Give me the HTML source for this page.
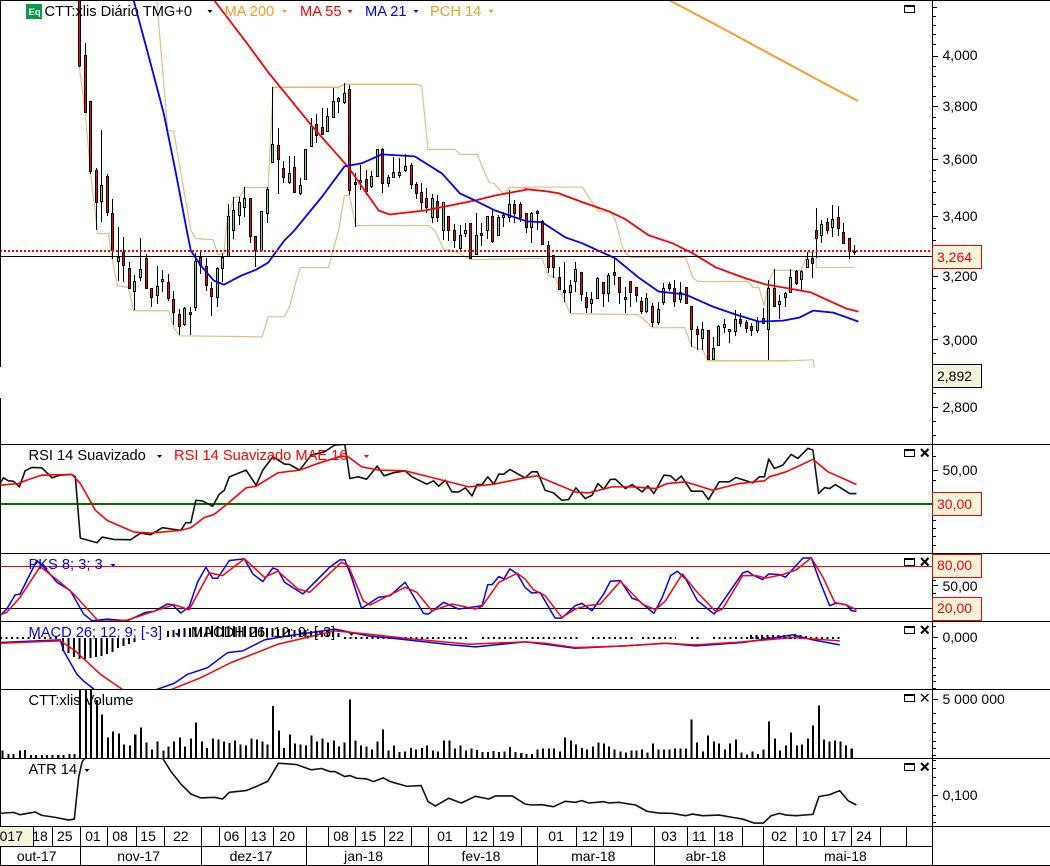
<!DOCTYPE html>
<html><head><meta charset="utf-8"><title>CTT:xlis</title>
<style>
html,body{margin:0;padding:0;background:#fff}
svg{display:block;font-family:"Liberation Sans",Arial,sans-serif;font-size:14px}
.l{fill:none;stroke-linejoin:round}
.l *{vector-effect:non-scaling-stroke}
.t{font-size:14.67px}
</style></head><body>
<svg width="1050" height="866" viewBox="0 0 1050 866" xmlns="http://www.w3.org/2000/svg">
<defs>
<clipPath id="c0"><rect x="0" y="0" width="932" height="444"/></clipPath>
<clipPath id="c1"><rect x="0" y="445" width="932" height="108"/></clipPath>
<clipPath id="c2"><rect x="0" y="554" width="932" height="67"/></clipPath>
<clipPath id="c3"><rect x="0" y="622" width="932" height="67"/></clipPath>
<clipPath id="c4"><rect x="0" y="690" width="932" height="68"/></clipPath>
<clipPath id="c5"><rect x="0" y="759" width="932" height="67"/></clipPath>
</defs>
<rect width="1050" height="866" fill="#fff"/>

<!-- main pane -->
<g clip-path="url(#c0)">
<g class="l" stroke="#dcc088" stroke-width="1.2">
<g transform="matrix(1.00435 0 0 1.0025 0 0)">
<polyline points="156,0 167,130 173,131 190,230 195,238 212,239 217,254 223,253 225,230 227,217 233,197 239,196 244,187 267,187 272,87 337,87 343,84 415,84 420,86 426,149 453,149 458,154 475,154 487,182 492,183 502,194 507,187 525,187"/>
<polyline points="79,67 85,113 90,172 97,230 97,233 108,233 110,250 117,285 128,287 133,310 168,310 173,327 179,335 261,336 267,316 283,316 288,307 295,280 299,267 327,267 337,230 343,195 348,195 354,225 427,225 433,230 442,249 448,249 458,253 469,259 525,258"/>
</g>
<g transform="matrix(1.00435 0 0 1.00435 -2.28 -.74)">
<polyline points="525,187 582,187 598,211 610,211 615,220 623,250 630,257 685,257 692,277 697,281 747,281 752,287 758,287 763,305 768,280 773,270 800,270 807,252 815,252 815,267 853,267"/>
<polyline points="525,258 542,258 548,275 555,277 570,313 638,314 652,327 684,327 691,346 702,349 707,360 788,360 812,359 813,367"/>
</g>
</g>
<g class="l" stroke="#d8a520" stroke-width="1" opacity=".65">
<polyline transform="matrix(1.00435 0 0 1.0025 0 0)" points="272,87 337,87 343,84 415,84"/>
<polyline transform="matrix(1.00435 0 0 1.00435 -2.28 -.74)" points="630,257 685,257"/>
<polyline transform="matrix(1.00435 0 0 1.00435 -2.28 -.74)" points="707,360 788,360"/>
</g>
<polyline fill="none" stroke="#ff9a2e" stroke-width="2" points="669,0 720,27 770,54 820,81 858,101"/>

<!-- wicks -->
<g fill="none" stroke="#000" stroke-width="1" shape-rendering="crispEdges">
<path d="M79.5 0V67M85.5 43V112M90.5 101V174M96.5 168V230M101.5 130V222M107.5 174V216M112.5 199V259M118.5 227V281M123.5 237V282M129.5 262V289M134.5 275V310M140.5 238V281M146.5 254V289M151.5 288V307M157.5 266V304M162.5 270V292M168.5 274V301M173.5 291V325M179.5 309V335M184.5 307V326M190.5 307V335M195.5 253V311M200.5 250V274M206.5 258V291M211.5 282V316M217.5 267V307M222.5 253V282M228.5 204V256M233.5 197V239M239.5 197V225M244.5 187V217M250.5 198V243M255.5 236V267M526.5 213V233M531.5 212V243M537.5 210V230M542.5 220V245M548.5 241V273M553.5 255V278M559.5 267V290M564.5 262V302M570.5 280V313M575.5 262V292M581.5 272V301M586.5 292V313M591.5 292V313M597.5 277V298M603.5 282V307M608.5 273V302M614.5 257V285M619.5 277V304M625.5 287V313M630.5 281V307M636.5 287V302M641.5 297V314M646.5 293V313"/>
<path transform="translate(1 0)" d="M260.5 211V250M266.5 187V223M271.5 87V163M277.5 128V194M282.5 161V183M288.5 156V184M293.5 156V193M299.5 178V195M304.5 149V180M310.5 118V147M315.5 114V143M321.5 108V135M326.5 108V131M332.5 88V117M337.5 97V113M343.5 83V104M348.5 85V195M354.5 173V227M359.5 165V190M365.5 170V195M370.5 171V188M376.5 149V177M381.5 148V193M387.5 175V187M392.5 157V178M651.5 303V327M657.5 302V325M662.5 283V305M668.5 282V291M673.5 280V307M679.5 282V303M685.5 287V303M690.5 306V347M696.5 326V350M701.5 322V350M707.5 330V360M712.5 337V360M717.5 325V346M723.5 319V333M728.5 329V343M734.5 310V336M739.5 313V327M745.5 320V333M750.5 323V336M756.5 317V333M762.5 308V324M767.5 280V360M773.5 269V307M778.5 295V319M784.5 292V307M789.5 269V293M795.5 270V285M800.5 270V290M806.5 252V268M811.5 252V278M815.5 208V258M820.5 220V243M826.5 218V234M831.5 205V237M837.5 206V236M842.5 223V244M848.5 238V259M853.5 245V255"/>
<path transform="translate(2 0)" d="M397.5 158V178M403.5 154V172M409.5 163V189M414.5 182V199M419.5 183V210M424.5 188V213M430.5 194V223M435.5 195V222M441.5 202V240M446.5 216V241M452.5 224V248M458.5 225V250M463.5 223V237M468.5 223V259M474.5 213V255M479.5 223V246M485.5 216V239M490.5 210V243M496.5 215V235M501.5 212V227M507.5 190V222M512.5 200V223M518.5 202V222"/>
</g>
<!-- red bodies -->
<g fill="#f00" stroke="#000" stroke-width="1" shape-rendering="crispEdges">
<path d="M78.5 -1h2v67h-2zM84.5 55.5h2v57h-2zM89.5 101.5h2v70h-2zM95.5 170.5h2v32h-2zM106.5 176.5h2v36h-2zM111.5 213.5h2v37h-2zM122.5 252.5h2v13h-2zM128.5 268.5h2v20h-2zM145.5 258.5h2v30h-2zM150.5 288.5h2v9h-2zM167.5 282.5h2v16h-2zM172.5 299.5h2v13h-2zM178.5 314.5h2v12h-2zM189.5 312.5h2v2h-2zM199.5 257.5h2v8h-2zM205.5 266.5h2v19h-2zM210.5 288.5h2v8h-2zM249.5 198.5h2v38h-2zM254.5 236.5h2v14h-2zM525.5 213.5h2v14h-2zM536.5 211.5h2v2h-2zM541.5 221.5h2v23h-2zM547.5 245.5h2v22h-2zM552.5 255.5h2v12h-2zM558.5 277.5h2v12h-2zM563.5 290.5h2v2h-2zM580.5 272.5h2v22h-2zM585.5 297.5h2v10h-2zM602.5 282.5h2v11h-2zM613.5 272.5h2v3h-2zM618.5 277.5h2v15h-2zM629.5 281.5h2v11h-2zM635.5 287.5h2v8h-2zM640.5 301.5h2v10h-2z"/>
<path transform="translate(1 0)" d="M276.5 145.5h2v14h-2zM281.5 168.5h2v9h-2zM292.5 167.5h2v25h-2zM314.5 124.5h2v11h-2zM320.5 127.5h2v7h-2zM347.5 89.5h2v101h-2zM353.5 182.5h2v2h-2zM364.5 179.5h2v12h-2zM380.5 149.5h2v34h-2zM650.5 306.5h2v16h-2zM667.5 284.5h2v4h-2zM672.5 288.5h2v13h-2zM684.5 287.5h2v16h-2zM689.5 306.5h2v23h-2zM695.5 329.5h2v5h-2zM706.5 330.5h2v29h-2zM738.5 319.5h2v4h-2zM744.5 322.5h2v6h-2zM749.5 326.5h2v4h-2zM761.5 318.5h2v5h-2zM772.5 288.5h2v18h-2zM794.5 271.5h2v12h-2zM810.5 258.5h2v5h-2zM814.5 230.5h2v8h-2zM825.5 222.5h2v8h-2zM836.5 217.5h2v11h-2zM841.5 232.5h2v11h-2zM847.5 238.5h2v13h-2z"/>
<path transform="translate(2 0)" d="M408.5 165.5h2v19h-2zM413.5 184.5h2v9h-2zM418.5 192.5h2v10h-2zM423.5 198.5h2v9h-2zM434.5 201.5h2v16h-2zM445.5 216.5h2v14h-2zM451.5 230.5h2v10h-2zM467.5 223.5h2v35h-2zM478.5 233.5h2v2h-2zM489.5 216.5h2v25h-2zM511.5 204.5h2v9h-2zM517.5 204.5h2v13h-2z"/>
</g>
<!-- green bodies -->
<g fill="#7fd07f" stroke="#000" stroke-width="1" shape-rendering="crispEdges">
<path d="M100.5 185.5h2v16h-2zM117.5 257.5h2v4h-2zM133.5 281.5h2v10h-2zM139.5 269.5h2v8h-2zM156.5 286.5h2v9h-2zM161.5 279.5h2v2h-2zM183.5 308.5h2v16h-2zM194.5 261.5h2v46h-2zM216.5 268.5h2v29h-2zM221.5 257.5h2v11h-2zM227.5 216.5h2v40h-2zM232.5 210.5h2v20h-2zM238.5 202.5h2v13h-2zM243.5 198.5h2v9h-2zM530.5 213.5h2v14h-2zM569.5 285.5h2v7h-2zM574.5 269.5h2v12h-2zM590.5 299.5h2v4h-2zM596.5 278.5h2v20h-2zM607.5 275.5h2v18h-2zM624.5 297.5h2v2h-2zM645.5 298.5h2v13h-2z"/>
<path transform="translate(1 0)" d="M259.5 211.5h2v39h-2zM265.5 189.5h2v24h-2zM270.5 144.5h2v18h-2zM287.5 173.5h2v9h-2zM298.5 185.5h2v8h-2zM303.5 149.5h2v30h-2zM309.5 126.5h2v20h-2zM325.5 116.5h2v15h-2zM331.5 101.5h2v16h-2zM336.5 98.5h2v3h-2zM342.5 93.5h2v9h-2zM358.5 180.5h2v2h-2zM369.5 176.5h2v10h-2zM375.5 149.5h2v27h-2zM386.5 177.5h2v6h-2zM391.5 172.5h2v5h-2zM656.5 309.5h2v13h-2zM661.5 288.5h2v14h-2zM678.5 292.5h2v7h-2zM700.5 329.5h2v9h-2zM711.5 348.5h2v11h-2zM716.5 326.5h2v19h-2zM722.5 324.5h2v3h-2zM727.5 329.5h2v2h-2zM733.5 319.5h2v12h-2zM755.5 321.5h2v9h-2zM766.5 288.5h2v41h-2zM777.5 301.5h2v3h-2zM783.5 293.5h2v4h-2zM788.5 277.5h2v15h-2zM799.5 271.5h2v8h-2zM805.5 259.5h2v8h-2zM819.5 224.5h2v11h-2zM830.5 219.5h2v8h-2zM852.5 251.5h2v1h-2z"/>
<path transform="translate(2 0)" d="M396.5 172.5h2v3h-2zM402.5 166.5h2v4h-2zM429.5 198.5h2v19h-2zM440.5 202.5h2v28h-2zM457.5 235.5h2v13h-2zM462.5 230.5h2v3h-2zM473.5 235.5h2v19h-2zM484.5 216.5h2v14h-2zM495.5 217.5h2v18h-2zM500.5 215.5h2v2h-2zM506.5 204.5h2v13h-2z"/>
</g>

<g class="l" stroke-width="1.8">
<g transform="matrix(1.00435 0 0 1.0025 0 0)">
<polyline stroke="#f00" points="213,0 245,42 267,72 310,125 347,167 377,210 388,214 423,210 473,200 493,195 525,189"/>
<polyline stroke="#00f" points="133,0 148,56 163,113 175,172 186,230 190,250 200,265 213,280 223,284 240,275 255,269 267,262 283,240 293,230 320,197 343,166 360,163 380,154 413,156 440,173 458,193 473,200 493,210 525,221"/>
</g>
<g transform="matrix(1.00435 0 0 1.00435 -2.28 -.74)">
<polyline stroke="#f00" points="525,189 545,191 558,193 582,202 608,211 625,219 648,235 672,243 692,253 715,267 745,278 765,284 788,288 810,292 825,299 845,308 857,311"/>
<polyline stroke="#00f" points="525,221 542,222 565,237 582,243 615,258 638,277 658,291 685,294 712,306 735,314 758,321 782,320 798,317 812,310 832,312 857,321"/>
</g>
</g>
</g>
<rect x="0" y="256" width="932" height="1" fill="#000"/>
<line x1="0" y1="251" x2="932" y2="251" stroke="#f00" stroke-width="2" stroke-dasharray="2 2"/>

<!-- RSI -->
<g clip-path="url(#c1)">
<line x1="0" y1="504" x2="932" y2="504" stroke="#006f00" stroke-width="2"/>
<g transform="translate(0,440) scale(.33478)" class="l" stroke-width="1.6">
<polyline stroke="#111" points="0,130 10,113 25,122 40,123 58,140 75,92 95,82 125,83 155,113 180,105 215,103 225,110 240,293 290,307 305,290 340,297 390,298 420,278 450,283 485,262 540,270 555,247 570,247 585,180 605,182 635,198 655,162 670,150 685,110 735,90 765,135 785,90 815,50 850,72 865,73 895,90 930,45 970,35 1000,15 1030,13 1045,115 1070,110 1095,117 1127,78 1147,107 1175,98 1210,92 1230,110 1275,132 1295,122 1310,138 1330,120 1350,155 1370,155 1390,143 1410,167 1425,133 1440,133 1457,110 1475,132 1490,102 1505,102 1523,88 1568,113"/>
<polyline stroke="#f00" points="0,135 55,130 85,118 125,105 215,103 240,130 285,210 320,240 400,275 450,278 540,270 570,262 610,232 640,222 680,190 735,143 765,138 830,98 895,90 950,70 1020,48 1040,50 1080,80 1130,90 1210,92 1290,112 1400,140 1475,132 1568,113"/>
</g>
<g transform="translate(-2.27,440) scale(.33478)" class="l" stroke-width="1.6">
<polyline stroke="#111" points="1575,113 1595,95 1612,95 1635,150 1660,158 1685,180 1705,178 1727,143 1755,175 1775,165 1793,130 1810,147 1830,118 1845,117 1875,145 1895,133 1925,155 1942,137 1960,160 1990,105 2010,107 2025,122 2042,108 2072,153 2105,153 2123,178 2155,125 2185,125 2205,112 2255,128 2275,110 2290,110 2303,57 2320,85 2345,75 2370,43 2390,55 2420,25 2435,30 2452,160 2470,142 2485,145 2502,133 2545,160 2565,160"/>
<polyline stroke="#f00" points="1575,113 1610,107 1725,155 1765,158 1835,140 1895,140 1965,145 2000,130 2055,125 2135,150 2215,130 2290,122 2305,110 2355,95 2435,58 2480,95 2565,133"/>
</g>
</g>

<!-- PKS -->
<line x1="0" y1="566.5" x2="932" y2="566.5" stroke="#f00" stroke-width="1"/>
<line x1="0" y1="608.5" x2="932" y2="608.5" stroke="#000" stroke-width="1"/>
<g clip-path="url(#c2)">
<g transform="translate(0,440) scale(.33478)" class="l" stroke-width="1.5">
<polyline stroke="#00f" points="0,525 20,505 45,463 60,460 110,360 130,378 170,425 210,450 250,520 275,540 320,535 380,540 435,515 460,512 500,490 515,492 540,517 565,498 590,425 615,380 635,413 650,413 685,360 730,355 755,400 785,423 815,382 830,388 850,425 905,460 950,415 985,380 1015,358 1030,358 1050,410 1080,503 1130,470 1165,465 1210,425 1240,475 1265,518 1280,520 1325,485 1370,505 1440,495 1457,432 1470,432 1490,408 1505,415 1523,385 1545,400 1568,440"/>
<polyline stroke="#f00" points="0,522 20,515 60,470 120,378 180,425 220,460 295,542 380,538 440,518 520,492 565,507 585,470 625,397 665,405 730,355 790,410 830,392 890,445 925,455 1020,365 1040,375 1085,480 1105,493 1210,440 1245,455 1290,510 1350,490 1420,505 1440,497 1490,425 1545,398 1568,415"/>
</g>
<g transform="translate(-2.27,440) scale(.33478)" class="l" stroke-width="1.5">
<polyline stroke="#00f" points="1575,440 1595,457 1620,455 1665,532 1685,532 1725,495 1745,488 1775,510 1810,460 1830,422 1860,420 1895,473 1915,480 1960,518 1985,470 2010,405 2030,392 2055,415 2090,480 2140,520 2225,397 2240,392 2255,403 2285,417 2303,400 2335,402 2353,410 2405,353 2430,352 2455,420 2485,495 2505,487 2535,492 2550,510 2565,512"/>
<polyline stroke="#f00" points="1575,415 1600,447 1635,465 1685,530 1725,505 1760,495 1800,490 1860,422 1925,490 1965,507 1995,480 2045,400 2085,450 2145,513 2165,505 2225,405 2265,405 2295,412 2345,402 2385,388 2430,352 2465,410 2500,485 2535,493 2565,507"/>
</g></g>

<!-- MACD -->
<g clip-path="url(#c3)">
<g fill="none" stroke="#000" stroke-width="2" stroke-dasharray="2 3.5" shape-rendering="crispEdges">
<path d="M0 638H60M344 638H467M482 638H578M592 638H633M642 638H676M691 638H699M713 638H793M799 638H843"/>
</g>
<path stroke="#000" stroke-width="1.6" fill="none" shape-rendering="crispEdges" d="M63 638V651M68.500 638V653M74 638V657M79.500 638V659M85 638V659M90.500 638V658M96 638V657M101.500 638V656M107 638V654M112.500 638V652M118 638V648M123.500 638V646M129 638V644M134.500 638V642M168 631V637M173.500 630V637M179 629V637M184.500 628V637M190 628V637M195.500 627V637M201 627V637M206.500 627V637M212 626V637M217.500 626V637M223 626V637M228.500 626V637M234 626V637M239.500 626V637M245 626V637M250.500 627V637M256 627V637M261.500 627V637M267 628V637M272.500 628V637M278 629V637M283.500 629V637M289 629V637M294.500 630V637M300 630V637M305.500 630V637M311 631V637M316.500 631V637M322 631V637M327.500 632V637M333 632V637M338.500 633V637M751 635V639M756.500 635V639M762 635V639M767.500 635V639M773 635V639M778.500 635V639M784 635V639M789.500 635V639M795 634V639M800.500 635V639M806 636V639"/>
<g transform="translate(0,440) scale(.33478)" class="l" stroke-width="1.5">
<polyline stroke="#00f" points="0,605 180,597 190,630 230,700 250,720 285,748 460,748 520,727 560,700 620,680 680,635 725,630 790,597 860,585 1000,565 1100,585 1200,595 1350,612 1420,618 1568,603"/>
<polyline stroke="#f00" points="0,607 180,600 225,630 300,700 370,748 505,748 600,710 690,665 780,630 830,610 1000,570 1100,580 1210,592 1400,610 1568,603"/>
</g>
<g transform="translate(-2.27,440) scale(.33478)" class="l" stroke-width="1.5">
<polyline stroke="#00f" points="1575,603 1635,610 1725,622 1875,615 1995,607 2085,615 2225,605 2375,582 2435,597 2515,612"/>
<polyline stroke="#f00" points="1575,603 1635,607 1725,620 1875,615 1995,607 2085,612 2225,603 2375,590 2515,600"/>
</g></g>

<!-- Volume -->
<g clip-path="url(#c4)">
<path transform="translate(0,650) scale(.33478)" fill="none" stroke="#000" stroke-width="6" shape-rendering="crispEdges" d="M8 325V300M25 325V310M41 325V310M60 325V300M75 325V298M93 325V313M108 325V313M125 325V313M140 325V313M157 325V313M174 325V313M190 325V313M207 325V310M222 325V310M239 325V100M257 325V100M272 325V100M290 325V150M305 325V192M322 325V262M338 325V243M355 325V249M371 325V283M388 325V285M404 325V252M421 325V232M438 325V277M454 325V297M471 325V273M488 325V300M504 325V288M520 325V273M537 325V262M553 325V288M570 325V265M586 325V216M603 325V273M619 325V292M636 325V265M652 325V267M669 325V273M685 325V278M702 325V270M718 325V283M735 325V285M751 325V265M768 325V267M784 325V273M799 325V282M815 325V168M833 325V240M848 325V292M866 325V252M881 325V279M898 325V283M914 325V285M931 325V255M947 325V273M964 325V265M980 325V276M997 325V270M1012 325V288M1029 325V276M1045 325V148M1062 325V270M1078 325V285M1095 325V288M1111 325V297M1128 325V273M1144 325V237M1161 325V300M1177 325V285M1194 325V305M1210 325V303M1227 325V292M1243 325V297M1260 325V292M1276 325V285M1293 325V300M1309 325V303M1326 325V270M1342 325V270M1359 325V294M1375 325V285M1392 325V300M1408 325V294M1425 325V298M1441 325V305M1458 325V305M1474 325V302M1491 325V305M1507 325V303M1524 325V289M1540 325V305M1557 325V307"/>
<path transform="translate(-2.27,650) scale(.33478)" fill="none" stroke="#000" stroke-width="6" shape-rendering="crispEdges" d="M1580 325V310M1596 325V310M1613 325V297M1629 325V294M1646 325V294M1662 325V294M1679 325V303M1695 325V262M1712 325V270M1728 325V282M1745 325V292M1760 325V297M1778 325V288M1794 325V277M1811 325V279M1826 325V288M1843 325V297M1860 325V303M1876 325V306M1893 325V300M1908 325V300M1925 325V297M1941 325V306M1957 325V279M1974 325V297M1990 325V297M2007 325V297M2023 325V294M2040 325V294M2056 325V294M2073 325V208M2089 325V277M2106 325V303M2122 325V255M2139 325V273M2155 325V279M2172 325V297M2188 325V279M2205 325V267M2221 325V306M2238 325V312M2254 325V303M2271 325V310M2288 325V297M2304 325V214M2321 325V264M2337 325V300M2354 325V285M2370 325V246M2387 325V285M2402 325V282M2420 325V264M2435 325V226M2453 325V166M2468 325V267M2485 325V273M2501 325V270M2518 325V273M2534 325V285M2551 325V294M2567 325V322"/>
</g>

<!-- ATR -->
<g clip-path="url(#c5)">
<g transform="translate(0,650) scale(.33478)" class="l" stroke-width="1.6">
<polyline stroke="#111" points="0,488 40,485 60,492 105,484 125,494 165,500 205,508 222,505 235,380 245,335 255,320 270,290 480,290 487,325 510,362 540,400 570,430 600,442 640,440 665,445 685,425 735,420 765,408 800,392 832,338 885,342 930,358 960,354 985,363 1000,363 1030,378 1045,375 1065,383 1095,385 1115,393 1145,382 1165,393 1215,407 1258,405 1278,452 1300,466 1340,443 1378,457 1420,437 1460,445 1480,436 1530,436 1568,460"/>
</g>
<g transform="translate(-2.27,650) scale(.33478)" class="l" stroke-width="1.6">
<polyline stroke="#111" points="1575,460 1595,463 1625,462 1660,468 1695,452 1725,455 1745,450 1765,457 1810,453 1825,457 1855,455 1905,463 1940,482 1975,487 2015,488 2055,495 2075,490 2105,495 2155,493 2195,500 2225,505 2260,517 2287,517 2310,495 2335,488 2355,493 2385,495 2435,491 2453,438 2485,432 2515,420 2540,450 2565,463"/>
</g></g>

<!-- grid lines -->
<g fill="#000" shape-rendering="crispEdges">
<rect x="0" y="0" width="1050" height="1"/>
<rect x="0" y="0" width="1" height="367"/>
<rect x="0" y="398" width="1" height="468"/>
<rect x="932" y="0" width="1" height="866"/>
<rect x="0" y="444" width="1050" height="1"/>
<rect x="0" y="553" width="1050" height="1"/>
<rect x="0" y="621" width="1050" height="1"/>
<rect x="0" y="689" width="1050" height="1"/>
<rect x="0" y="758" width="1050" height="1"/>
<rect x="0" y="826" width="1050" height="1"/>
<rect x="0" y="846" width="932" height="1"/>
<rect x="0" y="865" width="1050" height="1"/>
</g>
<!-- ticks -->
<path stroke="#000" stroke-width="1" fill="none" shape-rendering="crispEdges" d="M933 7.500h4M933 16.500h3M933 25.500h3M933 34.500h3M933 44.500h3M933 56.500h5M933 66.500h3M933 76.500h3M933 86.500h3M933 96.500h3M933 106.500h5M933 117.500h3M933 128.500h3M933 138.500h3M933 148.500h3M933 159.500h5M933 170.500h3M933 181.500h3M933 192.500h3M933 204.500h3M933 216.500h5M933 228.500h3M933 240.500h3M933 276.500h5M933 288.500h3M933 300.500h3M933 313.500h3M933 326.500h3M933 339.500h5M933 353.500h3M933 393.500h3M933 407.500h5M933 421.500h3M933 435.500h3M933 444.500h3M933 456.500h3M933 470.500h5M933 480.500h3M933 520.500h3M933 528.500h3M933 536.500h3M933 545.500h3M933 580.500h3M933 585.500h5M933 593.500h3M933 626.500h3M933 637.500h5M933 648.500h3M933 658.500h3M933 667.500h3M933 675.500h3M933 681.500h3M933 688.500h3M933 699.500h5M933 713.500h3M933 723.500h3M933 732.500h3M933 741.500h3M933 748.500h3M933 755.500h3M933 760.500h3M933 768.500h3M933 777.500h3M933 785.500h3M933 795.500h5M933 806.500h3M933 815.500h3M933 822.500h3"/>

<!-- date separators -->
<path stroke="#000" stroke-width="1" fill="none" shape-rendering="crispEdges" d="M52.500 827V846M80.500 827V865M107.500 827V846M136.500 827V846M164.500 827V846M201.500 827V865M219.500 827V846M245.500 827V846M273.500 827V846M306.500 827V865M328.500 827V846M355.500 827V846M384.500 827V846M411.500 827V846M428.500 827V865M466.500 827V846M493.500 827V846M521.500 827V846M537.500 827V865M576.500 827V846M603.500 827V846M631.500 827V846M654.500 827V865M687.500 827V846M714.500 827V846M742.500 827V846M763.500 827V865M796.500 827V846M824.500 827V846M851.500 827V846M880.500 827V846M906.500 827V846"/>
<text x="40" y="841" fill="#000" text-anchor="middle">18</text>
<rect x="0" y="827" width="33" height="19" fill="#f5f5dc"/>
<path stroke="#000" stroke-width="1" fill="none" shape-rendering="crispEdges" d="M33.500 827V846"/>
<g fill="#000" text-anchor="middle">
<text x="64.800" y="841">25</text><text x="92.900" y="841">01</text><text x="120" y="841">08</text><text x="148.100" y="841">15</text><text x="180.800" y="841">22</text><text x="231.500" y="841">06</text><text x="258.600" y="841">13</text><text x="287.200" y="841">20</text><text x="341" y="841">08</text><text x="368.600" y="841">15</text><text x="396.200" y="841">22</text><text x="444.900" y="841">01</text><text x="480" y="841">12</text><text x="506.700" y="841">19</text><text x="556.100" y="841">01</text><text x="589.800" y="841">12</text><text x="616.400" y="841">19</text><text x="669.100" y="841">03</text><text x="699.300" y="841">11</text><text x="725.900" y="841">18</text><text x="779.100" y="841">02</text><text x="809.700" y="841">10</text><text x="838.400" y="841">17</text><text x="864" y="841">24</text>
<text x="36.700" y="861">out-17</text><text x="138.600" y="861">nov-17</text><text x="251" y="861">dez-17</text><text x="363.600" y="861">jan-18</text><text x="481" y="861">fev-18</text><text x="593.300" y="861">mar-18</text><text x="705.800" y="861">abr-18</text><text x="845.400" y="861">mai-18</text>
</g>
<text x="23" y="841" text-anchor="end" fill="#000">2017</text>

<!-- legend main -->
<rect x="26" y="4" width="16" height="15" fill="#0b9a47"/>
<text x="28.500" y="15" fill="#fff" style="font-size:9.500px;font-weight:bold">Eq</text>
<g class="t">
<text x="44.500" y="16" fill="#000">CTT:xlis Diário TMG+0</text>
<text x="224.500" y="16" fill="#ff9a1e">MA 200</text>
<text x="300" y="16" fill="#f00">MA 55</text>
<text x="365" y="16" fill="#00f">MA 21</text>
<text x="430" y="16" fill="#daa520">PCH 14</text>
<text x="28.500" y="460" fill="#000">RSI 14 Suavizado</text>
<text x="174" y="460" fill="#f00">RSI 14 Suavizado MAE 16</text>
<text x="28.500" y="569" fill="#00f">PKS 8; 3; 3</text>
<text x="28.500" y="637" fill="#00f">MACD 26; 12; 9; [-3]</text>
<text x="191" y="637" fill="#000">MACDH 26; 12; 9; [-3]</text>
<text x="28.500" y="705" fill="#000">CTT:xlis Volume</text>
<text x="28.500" y="774" fill="#000">ATR 14</text>
</g>
<path d="M207.500 10h5l-2.500 3z" fill="#000"/>
<path d="M282 10h5l-2.500 3z" fill="#ff9a1e"/>
<path d="M347.500 10h5l-2.500 3z" fill="#f00"/>
<path d="M413.500 10h5l-2.500 3z" fill="#00f"/>
<path d="M488.500 10h5l-2.500 3z" fill="#daa520"/>
<path d="M157 455h5l-2.500 3z" fill="#000"/>
<path d="M364 455h5l-2.500 3z" fill="#f00"/>
<path d="M110.500 564h5l-2.500 3z" fill="#00f"/>
<path d="M175 633h5l-2.500 3z" fill="#00f"/>
<path d="M349 633h5l-2.500 3z" fill="#000"/>
<path d="M84.500 769h5l-2.500 3z" fill="#000"/>

<!-- window buttons -->
<g fill="none" stroke="#000" shape-rendering="crispEdges">
<rect x="904.500" y="5.500" width="10" height="7"/><path d="M905 6.500h9"/>
<rect x="904.500" y="449.500" width="10" height="7"/><path d="M905 450.500h9"/>
<rect x="904.500" y="558.500" width="10" height="7"/><path d="M905 559.500h9"/>
<rect x="904.500" y="626.500" width="10" height="7"/><path d="M905 627.500h9"/>
<rect x="904.500" y="694.500" width="10" height="7"/><path d="M905 695.500h9"/>
<rect x="904.500" y="763.500" width="10" height="7"/><path d="M905 764.500h9"/>
</g>
<g stroke="#000" stroke-width="2" fill="none">
<path d="M921 449l7.500 7.500M928.500 449l-7.500 7.500M921 558l7.500 7.500M928.500 558l-7.500 7.500M921 626l7.500 7.500M928.500 626l-7.500 7.500M921 763l7.500 7.500M928.500 763l-7.500 7.500"/>
</g>
<path stroke="#000" stroke-width="1.300" fill="none" d="M921 694l7.500 7.500M928.500 694l-7.500 7.500"/>

<!-- axis labels -->
<g fill="#000">
<text x="942.500" y="60">4,000</text><text x="942.500" y="111">3,800</text><text x="942.500" y="164">3,600</text><text x="942.500" y="221">3,400</text><text x="942.500" y="281">3,200</text><text x="942.500" y="345">3,000</text><text x="942.500" y="412">2,800</text>
<text x="942.500" y="475">50,00</text><text x="942.500" y="591">50,00</text><text x="942.500" y="642">0,000</text><text x="942.500" y="704">5 000 000</text><text x="942.500" y="800">0,100</text>
</g>
<g shape-rendering="crispEdges">
<rect x="932.500" y="245.500" width="49" height="23" fill="#f5f5dc" stroke="#f00"/>
<rect x="932.500" y="364.500" width="49" height="23" fill="#f5f5dc" stroke="#000"/>
<rect x="932.500" y="492.500" width="49" height="23" fill="#f5f5dc" stroke="#f00"/>
<rect x="932.500" y="554.500" width="49" height="23" fill="#f5f5dc" stroke="#f00"/>
<rect x="932.500" y="597.500" width="49" height="23" fill="#f5f5dc" stroke="#f00"/>
</g>
<text x="937" y="262" fill="#f00">3,264</text>
<text x="937" y="381" fill="#000">2,892</text>
<text x="937" y="509" fill="#f00">30,00</text>
<text x="937" y="570" fill="#f00">80,00</text>
<text x="937" y="613" fill="#f00">20,00</text>
</svg>
</body></html>
